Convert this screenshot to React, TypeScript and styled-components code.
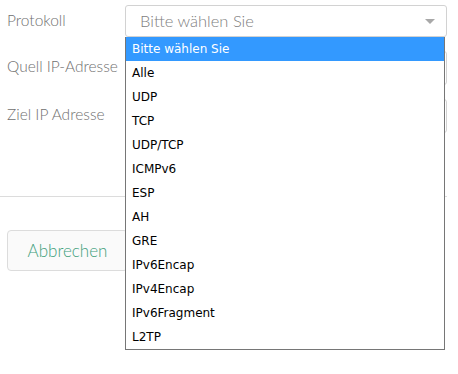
import React, { useState } from "react";
import styled, { createGlobalStyle } from "styled-components";

const OPTIONS = [
  "Bitte wählen Sie",
  "Alle",
  "UDP",
  "TCP",
  "UDP/TCP",
  "ICMPv6",
  "ESP",
  "AH",
  "GRE",
  "IPv6Encap",
  "IPv4Encap",
  "IPv6Fragment",
  "L2TP",
];

export default function App() {
  const [selected] = useState(0);

  return (
    <>
      <GlobalStyle />
      <Page>
        <Form>
          <Label>Protokoll</Label>
          <SelectWrap>
            <SelectBox>
              <SelectText>Bitte wählen Sie</SelectText>
              <Caret />
            </SelectBox>
            <Dropdown>
              {OPTIONS.map((opt, i) => (
                <Option key={opt} $active={i === selected}>
                  {opt}
                </Option>
              ))}
            </Dropdown>
          </SelectWrap>

          <Label>Quell IP-Adresse</Label>
          <Input type="text" />

          <Label>Ziel IP Adresse</Label>
          <Input type="text" />
        </Form>

        <Divider />

        <Button>Abbrechen</Button>
      </Page>
    </>
  );
}

const GlobalStyle = createGlobalStyle`
  html, body {
    margin: 0;
    padding: 0;
    background: #fff;
  }
  body {
    font-family: Lato, "Open Sans", sans-serif;
  }
`;

const Page = styled.div`
  width: 458px;
  height: 374px;
  overflow: hidden;
  padding-top: 5px;
  box-sizing: border-box;
`;

const Form = styled.div`
  display: grid;
  grid-template-columns: 125px 322px;
  row-gap: 14px;
  align-items: center;
`;

const Label = styled.label`
  padding-left: 7px;
  font-size: 15.5px;
  font-weight: 300;
  color: #707070;
  align-self: start;
  margin-top: 6px;
`;

const SelectWrap = styled.div`
  position: relative;
`;

const SelectBox = styled.div`
  height: 32px;
  box-sizing: border-box;
  border: 1px solid #d2d2d2;
  border-radius: 3px;
  display: flex;
  align-items: center;
  justify-content: space-between;
  padding: 0 11px 0 14px;
  background: #fff;
`;

const SelectText = styled.span`
  font-size: 16.5px;
  color: #808080;
  font-weight: 300;
`;

const Caret = styled.span`
  width: 0;
  height: 0;
  border-left: 5px solid transparent;
  border-right: 5px solid transparent;
  border-top: 5px solid #a8a8a8;
`;

const Dropdown = styled.ul`
  position: absolute;
  top: 32px;
  left: 0;
  width: 320px;
  margin: 0;
  padding: 0;
  list-style: none;
  background: #fff;
  border: 1px solid #767676;
  border-top: none;
  box-sizing: border-box;
  z-index: 10;
`;

const Option = styled.li<{ $active?: boolean }>`
  height: 24px;
  line-height: 24px;
  padding-left: 6px;
  font-family: "DejaVu Sans", Verdana, sans-serif;
  font-size: 12px;
  color: ${(p) => (p.$active ? "#fff" : "#000")};
  background: ${(p) => (p.$active ? "#3399ff" : "#fff")};
  white-space: nowrap;
`;

const Input = styled.input`
  height: 34px;
  box-sizing: border-box;
  border: 1px solid #d2d2d2;
  border-radius: 3px;
  width: 100%;
`;

const Divider = styled.hr`
  margin: 63px 11px 0 0;
  border: none;
  border-top: 1px solid #dcdcdc;
`;

const Button = styled.button`
  margin: 33px 0 0 7px;
  width: 121px;
  height: 41px;
  border: 1px solid #dcdcdc;
  border-radius: 4px;
  background: #fafafa;
  font-family: Lato, "Open Sans", sans-serif;
  font-size: 17px;
  font-weight: 300;
  color: #3fa07c;
`;
